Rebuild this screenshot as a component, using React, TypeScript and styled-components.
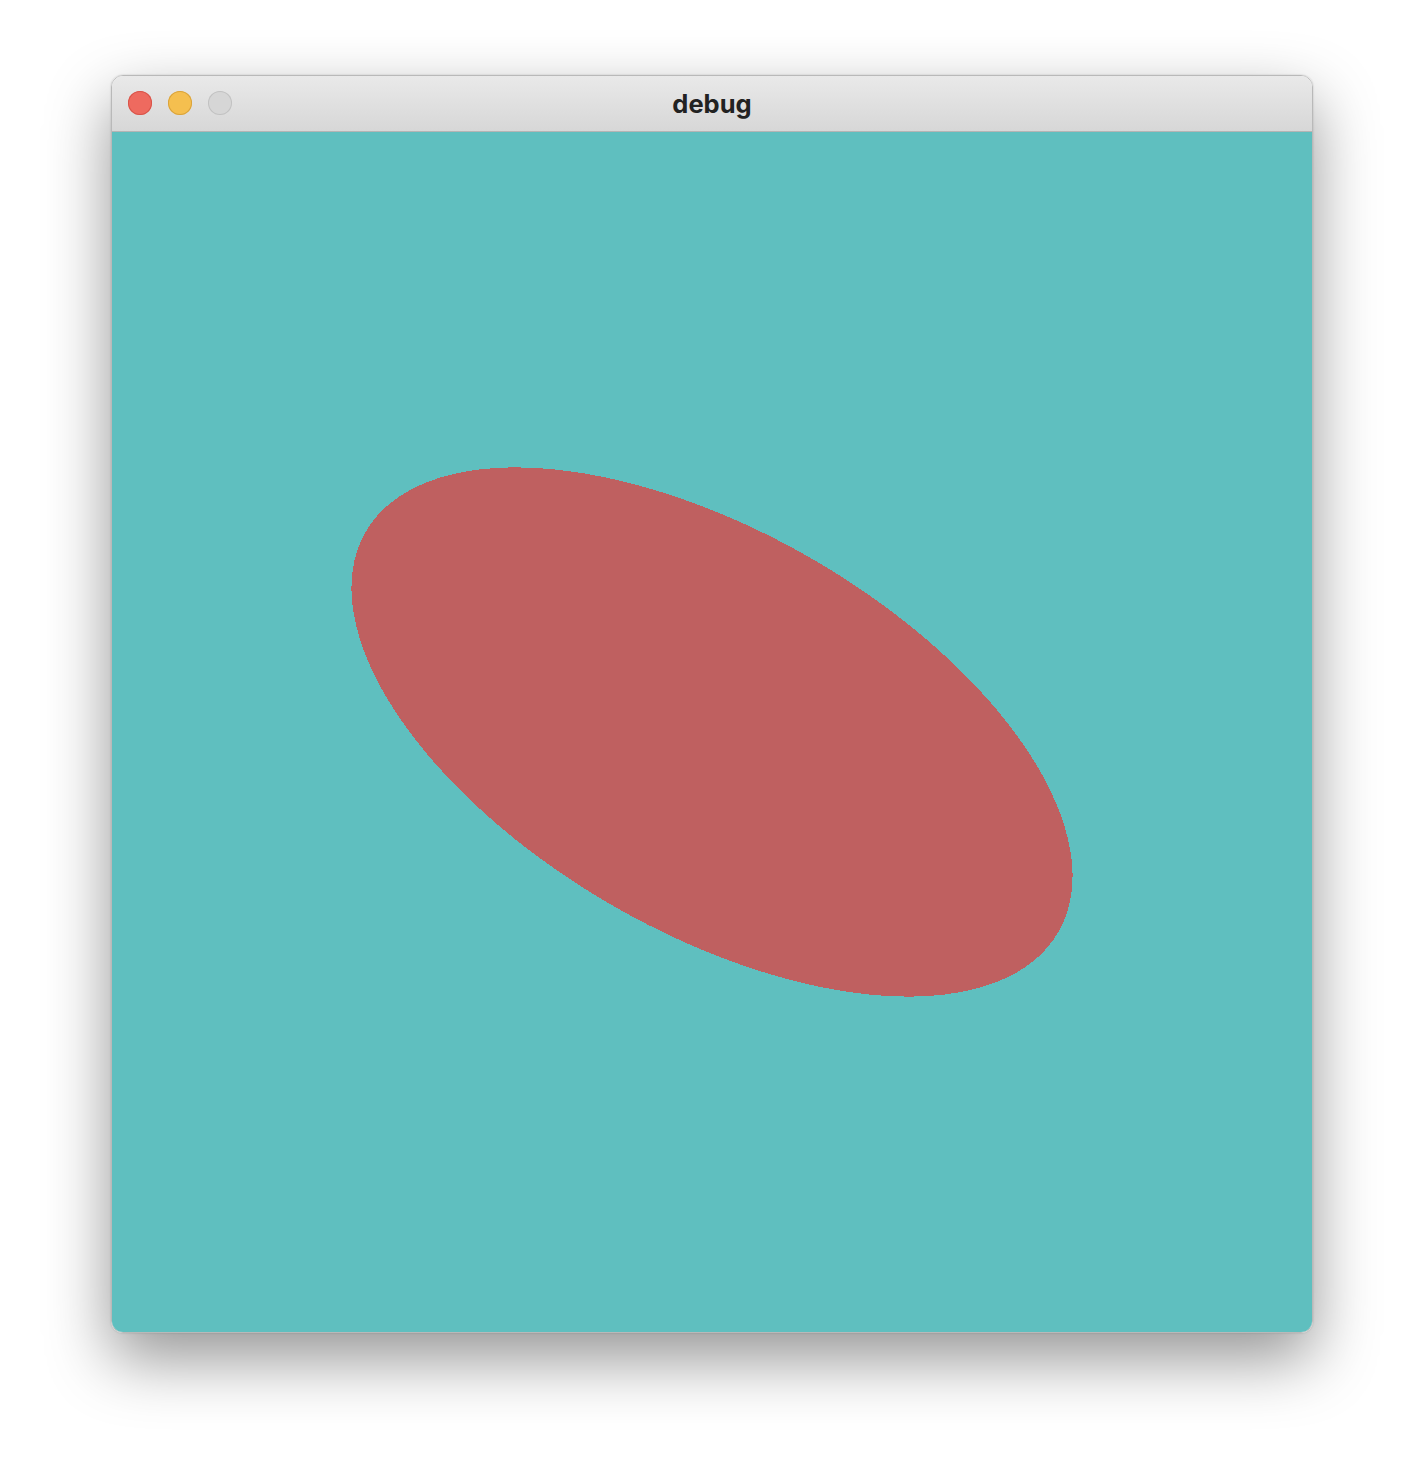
import styled, { createGlobalStyle } from 'styled-components';

const GlobalStyle = createGlobalStyle`
  html, body {
    margin: 0;
    padding: 0;
    background: #ffffff;
  }
`;

const Page = styled.div`
  width: 1424px;
  height: 1480px;
  padding: 75px 0 0 111px;
  box-sizing: border-box;
`;

const Window = styled.div`
  width: 1202px;
  border: 1px solid #b9b9b9;
  border-radius: 12px;
  overflow: hidden;
  box-sizing: border-box;
  box-shadow: 0 26px 64px rgba(0, 0, 0, 0.42), 0 0 2px rgba(0, 0, 0, 0.2);
`;

const TitleBar = styled.div`
  position: relative;
  height: 55px;
  display: flex;
  align-items: center;
  justify-content: center;
  background: linear-gradient(#e9e9e9, #d7d7d7);
  border-bottom: 1px solid #b4b4b4;
`;

const Lights = styled.div`
  position: absolute;
  left: 16px;
  top: 15px;
  display: flex;
  gap: 16px;
`;

const Light = styled.span<{ $fill: string; $edge: string }>`
  width: 24px;
  height: 24px;
  border-radius: 50%;
  background: ${(p) => p.$fill};
  box-shadow: inset 0 0 0 1px ${(p) => p.$edge};
`;

const Title = styled.h1`
  margin: 0;
  font-family: Inter, 'Liberation Sans', sans-serif;
  font-weight: 700;
  font-size: 25.5px;
  color: #222222;
`;

const Canvas = styled.div`
  width: 1200px;
  height: 1200px;
  background: #5fbfbf;
`;

export default function App() {
  return (
    <Page>
      <GlobalStyle />
      <Window>
        <TitleBar>
          <Lights>
            <Light $fill="#ee6a5f" $edge="#d8544a" />
            <Light $fill="#f5bf4f" $edge="#d9a33c" />
            <Light $fill="#d6d6d6" $edge="#c2c2c2" />
          </Lights>
          <Title>debug</Title>
        </TitleBar>
        <Canvas>
          <svg width="1200" height="1200" viewBox="0 0 1200 1200" shapeRendering="crispEdges">
            <ellipse cx="600" cy="600" rx="400" ry="200" fill="#bf6060" transform="rotate(30 600 600)" />
          </svg>
        </Canvas>
      </Window>
    </Page>
  );
}
